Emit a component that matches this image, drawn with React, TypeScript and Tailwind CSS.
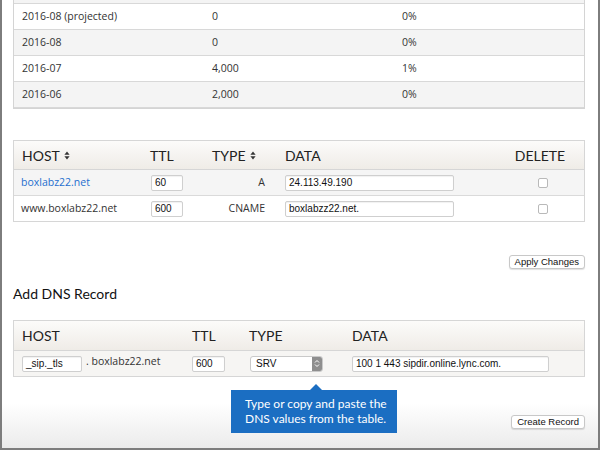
import React from "react";

const body = "font-['Open_Sans',sans-serif] text-[10.5px] text-[#333]";
const head = "font-['Lato',sans-serif] text-[14px] text-[#222]";

function SortIcon() {
  return (
    <svg width="6" height="9" viewBox="0 0 6 9" className="ml-[4px] inline-block">
      <path d="M3 0.5 L5.6 3.8 H0.4 Z" fill="#333" />
      <path d="M3 8.5 L5.6 5.2 H0.4 Z" fill="#333" />
    </svg>
  );
}

function TextBox({ value, w }: { value: string; w: string }) {
  return (
    <div
      className={`${w} h-[16px] rounded-[2px] border border-[#cfcfcf] bg-white pl-[3px] font-['Liberation_Sans',sans-serif] text-[10px] leading-[14px] text-[#111] shadow-[inset_0_1px_1px_rgba(0,0,0,0.06)]`}
    >
      {value}
    </div>
  );
}

function Checkbox() {
  return <div className="h-[10px] w-[10px] rounded-[2px] border border-[#b9b9b9] bg-white" />;
}

function Button({ label }: { label: string }) {
  return (
    <div className="rounded-[3px] border border-[#c8c8c8] bg-white px-[5px] font-['Liberation_Sans',sans-serif] text-[9.5px] leading-[12px] text-[#111] shadow-[0_1px_1px_rgba(0,0,0,0.12)]">
      {label}
    </div>
  );
}

const usage = [
  { month: "", count: "", pct: "" },
  { month: "2016-08 (projected)", count: "0", pct: "0%" },
  { month: "2016-08", count: "0", pct: "0%" },
  { month: "2016-07", count: "4,000", pct: "1%" },
  { month: "2016-06", count: "2,000", pct: "0%" },
];

export default function App() {
  return (
    <div className="h-[450px] w-[600px] overflow-hidden border-x-2 border-b-2 border-[#7d7d7d] bg-[linear-gradient(to_bottom,#ffffff_0%,#ffffff_90%,#ebebeb_100%)] pl-[11px] pr-[13px]">
      {/* usage table */}
      <div className={`-mt-[22px] border border-t-0 border-[#d4d4d4] ${body}`}>
        {usage.map((r, i) => (
          <div
            key={i}
            className={`flex h-[26px] items-center border-b border-[#d8d8d8] ${i % 2 === 0 ? "bg-[#f4f4f4]" : "bg-white"}`}
          >
            <div className="w-[198px] pl-[8px]">{r.month}</div>
            <div className="w-[190px]">{r.count}</div>
            <div>{r.pct}</div>
          </div>
        ))}
      </div>

      {/* dns records */}
      <div className="mt-[31px] border border-[#d6d6d6]">
        <div className={`grid h-[29px] grid-cols-[128px_62px_73px_219px_1fr] items-center border-b border-[#d6d6d6] bg-[linear-gradient(to_bottom,#fcfbfa,#efece7)] ${head}`}>
          <div className="flex items-center pl-[8px]">HOST<SortIcon /></div>
          <div className="pl-[8px]">TTL</div>
          <div className="flex items-center pl-[8px]">TYPE<SortIcon /></div>
          <div className="pl-[8px]">DATA</div>
          <div className="text-center">DELETE</div>
        </div>
        <div className={`grid h-[26px] grid-cols-[128px_62px_73px_219px_1fr] items-center border-b border-[#dadada] bg-[#f5f5f5] ${body}`}>
          <div className="pl-[7px] text-[#1f6fcf]">boxlabz22.net</div>
          <div className="pl-[9px]"><TextBox value="60" w="w-[32px]" /></div>
          <div className="pr-[12px] text-right">A</div>
          <div className="pl-[8px]"><TextBox value="24.113.49.190" w="w-[169px]" /></div>
          <div className="flex justify-center pl-[6px]"><Checkbox /></div>
        </div>
        <div className={`grid h-[25px] grid-cols-[128px_62px_73px_219px_1fr] items-center bg-white ${body}`}>
          <div className="pl-[7px]">www.boxlabz22.net</div>
          <div className="pl-[9px]"><TextBox value="600" w="w-[32px]" /></div>
          <div className="pr-[12px] text-right">CNAME</div>
          <div className="pl-[8px]"><TextBox value="boxlabzz22.net." w="w-[169px]" /></div>
          <div className="flex justify-center pl-[6px]"><Checkbox /></div>
        </div>
      </div>

      <div className="mt-[33px] flex justify-end">
        <Button label="Apply Changes" />
      </div>

      <h2 className="mt-[16px] font-['Lato',sans-serif] text-[14px] leading-[18px] text-[#111]">
        Add DNS Record
      </h2>

      {/* add record */}
      <div className="mt-[17px] border border-[#d6d6d6]">
        <div className={`grid h-[30px] grid-cols-[170px_57px_103px_1fr] items-center border-b border-[#d6d6d6] bg-[linear-gradient(to_bottom,#fcfbfa,#efece7)] ${head}`}>
          <div className="pl-[8px]">HOST</div>
          <div className="pl-[8px]">TTL</div>
          <div className="pl-[8px]">TYPE</div>
          <div className="pl-[8px]">DATA</div>
        </div>
        <div className={`grid h-[25px] grid-cols-[170px_57px_103px_1fr] items-center bg-[#f6f5f3] ${body}`}>
          <div className="flex items-center pl-[8px]">
            <TextBox value="_sip._tls" w="w-[60px]" />
            <span className="ml-[4px] -mt-[3px]">. boxlabz22.net</span>
          </div>
          <div className="pl-[8px]"><TextBox value="600" w="w-[33px]" /></div>
          <div className="pl-[9px]">
            <div className="flex h-[16px] w-[73px] items-center overflow-hidden rounded-[3px] border border-[#c9c9c9] bg-white font-['Liberation_Sans',sans-serif] text-[10px] text-[#111]">
              <span className="flex-1 pl-[5px]">SRV</span>
              <div className="flex h-full w-[10px] items-center justify-center bg-[#8e8e8e]">
                <svg width="6" height="9" viewBox="0 0 6 9">
                  <path d="M1 3.5 L3 1.5 L5 3.5 M1 5.5 L3 7.5 L5 5.5" fill="none" stroke="#fff" strokeWidth="1" />
                </svg>
              </div>
            </div>
          </div>
          <div className="pl-[8px]"><TextBox value="100 1 443 sipdir.online.lync.com." w="w-[197px]" /></div>
        </div>
      </div>

      <div className="flex items-start">
        <div className="relative ml-[218px] mt-[13px] w-[166px] whitespace-nowrap bg-[#1b6ec2] pb-[7px] pl-[14px] pt-[6px] font-['Lato',sans-serif] text-[12px] leading-[15px] text-white">
          <div className="absolute -top-[6px] left-[79px] h-0 w-0 border-x-[6px] border-b-[6px] border-x-transparent border-b-[#1b6ec2]" />
          <div>Type or copy and paste the</div>
          <div>DNS values from the table.</div>
        </div>
        <div className="ml-auto mt-[38px]">
          <Button label="Create Record" />
        </div>
      </div>
    </div>
  );
}
